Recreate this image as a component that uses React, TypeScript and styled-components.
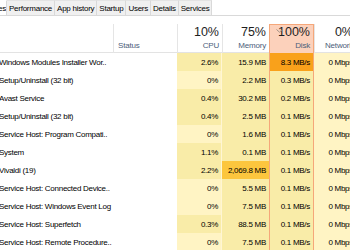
import React from 'react';
import styled, { createGlobalStyle } from 'styled-components';

type Heat = 0 | 1 | 2 | 3;

type Process = {
  name: string;
  cpu: string;
  cpuHeat: Heat;
  mem: string;
  memHeat: Heat;
  disk: string;
  diskHeat: Heat;
  net: string;
};

const processes: Process[] = [
  { name: 'Windows Modules Installer Wor..', cpu: '2.6%', cpuHeat: 1, mem: '15.9 MB', memHeat: 1, disk: '8.3 MB/s', diskHeat: 3, net: '0 Mbps' },
  { name: 'Setup/Uninstall (32 bit)', cpu: '0%', cpuHeat: 0, mem: '2.2 MB', memHeat: 1, disk: '0.3 MB/s', diskHeat: 1, net: '0 Mbps' },
  { name: 'Avast Service', cpu: '0.4%', cpuHeat: 1, mem: '30.2 MB', memHeat: 1, disk: '0.2 MB/s', diskHeat: 1, net: '0 Mbps' },
  { name: 'Setup/Uninstall (32 bit)', cpu: '0.4%', cpuHeat: 1, mem: '2.5 MB', memHeat: 1, disk: '0.1 MB/s', diskHeat: 1, net: '0 Mbps' },
  { name: 'Service Host: Program Compati..', cpu: '0%', cpuHeat: 0, mem: '1.6 MB', memHeat: 1, disk: '0.1 MB/s', diskHeat: 1, net: '0 Mbps' },
  { name: 'System', cpu: '1.1%', cpuHeat: 1, mem: '0.1 MB', memHeat: 1, disk: '0.1 MB/s', diskHeat: 1, net: '0 Mbps' },
  { name: 'Vivaldi (19)', cpu: '2.2%', cpuHeat: 1, mem: '2,069.8 MB', memHeat: 2, disk: '0.1 MB/s', diskHeat: 1, net: '0 Mbps' },
  { name: 'Service Host: Connected Device..', cpu: '0%', cpuHeat: 0, mem: '5.5 MB', memHeat: 1, disk: '0.1 MB/s', diskHeat: 1, net: '0 Mbps' },
  { name: 'Service Host: Windows Event Log', cpu: '0%', cpuHeat: 0, mem: '7.5 MB', memHeat: 1, disk: '0.1 MB/s', diskHeat: 1, net: '0 Mbps' },
  { name: 'Service Host: Superfetch', cpu: '0.3%', cpuHeat: 1, mem: '88.5 MB', memHeat: 1, disk: '0.1 MB/s', diskHeat: 1, net: '0 Mbps' },
  { name: 'Service Host: Remote Procedure..', cpu: '0%', cpuHeat: 0, mem: '7.5 MB', memHeat: 1, disk: '0.1 MB/s', diskHeat: 1, net: '0 Mbps' },
];

const tabs = ['Processes', 'Performance', 'App history', 'Startup', 'Users', 'Details', 'Services'];

const heatColors: Record<Heat, string> = {
  0: '#fff4c4',
  1: '#f9eca8',
  2: '#fcc63e',
  3: '#f9a11b',
};

const COLS = '113px 64px 45px 47px 45px 42px';

const GlobalStyle = createGlobalStyle`
  html, body {
    margin: 0;
    padding: 0;
    background: #ffffff;
    overflow: hidden;
  }
  body {
    width: 350px;
    height: 250px;
    font-family: 'Liberation Sans', Arial, sans-serif;
  }
`;

export default function App() {
  return (
    <>
      <GlobalStyle />
      <Window>
        <TabBar>
          {tabs.map((tab, i) => (
            <Tab key={tab} active={i === 0} cropped={i === 0}>
              {tab}
            </Tab>
          ))}
        </TabBar>

        <HeaderRow>
          <HeadCell />
          <HeadCell>
            <HeadLabel align="left">Status</HeadLabel>
          </HeadCell>
          <HeadCell>
            <HeadValue>10%</HeadValue>
            <HeadLabel>CPU</HeadLabel>
          </HeadCell>
          <HeadCell>
            <HeadValue>75%</HeadValue>
            <HeadLabel>Memory</HeadLabel>
          </HeadCell>
          <HeadCell sorted>
            <SortChevron>
              <svg width="7" height="4" viewBox="0 0 7 4">
                <path d="M0.5 0.5 L3.5 3.2 L6.5 0.5" fill="none" stroke="#9a8a80" strokeWidth="0.9" />
              </svg>
            </SortChevron>
            <HeadValue>100%</HeadValue>
            <HeadLabel>Disk</HeadLabel>
          </HeadCell>
          <HeadCell>
            <HeadValue>0%</HeadValue>
            <HeadLabel>Network</HeadLabel>
          </HeadCell>
        </HeaderRow>

        <Rows>
          {processes.map((p, i) => (
            <Row key={i}>
              <NameCell>{p.name}</NameCell>
              <Cell />
              <HeatCell heat={p.cpuHeat} divider>{p.cpu}</HeatCell>
              <HeatCell heat={p.memHeat}>{p.mem}</HeatCell>
              <HeatCell heat={p.diskHeat} sorted>{p.disk}</HeatCell>
              <HeatCell heat={0}>{p.net}</HeatCell>
            </Row>
          ))}
        </Rows>
      </Window>
    </>
  );
}

const Window = styled.div`
  width: 350px;
  height: 250px;
  overflow: hidden;
  background: #ffffff;
  color: #1a1a1a;
`;

const TabBar = styled.div`
  display: flex;
  height: 15px;
  border-bottom: 1px solid #d9d9d9;
  white-space: nowrap;
`;

// the first tab is cut by the left edge of the shot: only its tail shows
const Tab = styled.div<{ active?: boolean; cropped?: boolean }>`
  display: flex;
  align-items: center;
  justify-content: flex-end;
  width: ${({ cropped }) => (cropped ? '6px' : 'auto')};
  overflow: hidden;
  padding: ${({ cropped }) => (cropped ? '0' : '0 2px')};
  font-size: 8px;
  letter-spacing: -0.25px;
  color: #000000;
  background: ${({ active }) => (active ? '#ffffff' : '#f0f0f0')};
  border-right: 1px solid #d9d9d9;
  border-top: 1px solid ${({ active }) => (active ? '#ffffff' : '#e3e3e3')};
  flex-shrink: 0;
`;

const HeaderRow = styled.div`
  display: grid;
  grid-template-columns: ${COLS};
  height: 37px;
  padding-top: 8px;
  box-sizing: border-box;
  border-bottom: 1px solid #e3e3e3;
`;

const HeadCell = styled.div<{ sorted?: boolean }>`
  position: relative;
  display: flex;
  flex-direction: column;
  justify-content: flex-end;
  padding: 0 3px 2px 4px;
  border-left: 1px solid ${({ sorted }) => (sorted ? '#f5a77a' : '#e5e5e5')};
  border-right: ${({ sorted }) => (sorted ? '1px solid #f5a77a' : 'none')};
  border-top: ${({ sorted }) => (sorted ? '1px solid #f5a77a' : 'none')};
  background: ${({ sorted }) => (sorted ? '#fcd1bb' : 'transparent')};
  &:first-child {
    border-left: none;
  }
`;

const SortChevron = styled.span`
  position: absolute;
  top: 3px;
  left: 6px;
  line-height: 0;
`;

const HeadValue = styled.div`
  font-size: 12.5px;
  line-height: 15px;
  text-align: right;
  color: #1e1e1e;
  white-space: nowrap;
`;

const HeadLabel = styled.div<{ align?: 'left' | 'right' }>`
  font-size: 8px;
  letter-spacing: -0.2px;
  line-height: 11px;
  text-align: ${({ align }) => align || 'right'};
  color: #4c607a;
  white-space: nowrap;
`;

const Rows = styled.div`
  display: flex;
  flex-direction: column;
`;

const Row = styled.div`
  display: grid;
  grid-template-columns: ${COLS};
  height: 18px;
`;

const Cell = styled.div`
  display: flex;
  align-items: center;
  font-size: 8px;
  letter-spacing: -0.28px;
  white-space: nowrap;
  overflow: hidden;
`;

const NameCell = styled(Cell)`
  margin-left: -1px;
  color: #000000;
`;

const HeatCell = styled(Cell)<{ heat: Heat; sorted?: boolean; divider?: boolean }>`
  justify-content: flex-end;
  padding-right: 3px;
  background: ${({ heat }) => heatColors[heat]};
  color: #000000;
  border-left: ${({ sorted }) => (sorted ? '1px solid #f5a77a' : 'none')};
  border-right: ${({ sorted, divider }) =>
    sorted ? '1px solid #f5a77a' : divider ? '1px solid #fff6d4' : 'none'};
`;
